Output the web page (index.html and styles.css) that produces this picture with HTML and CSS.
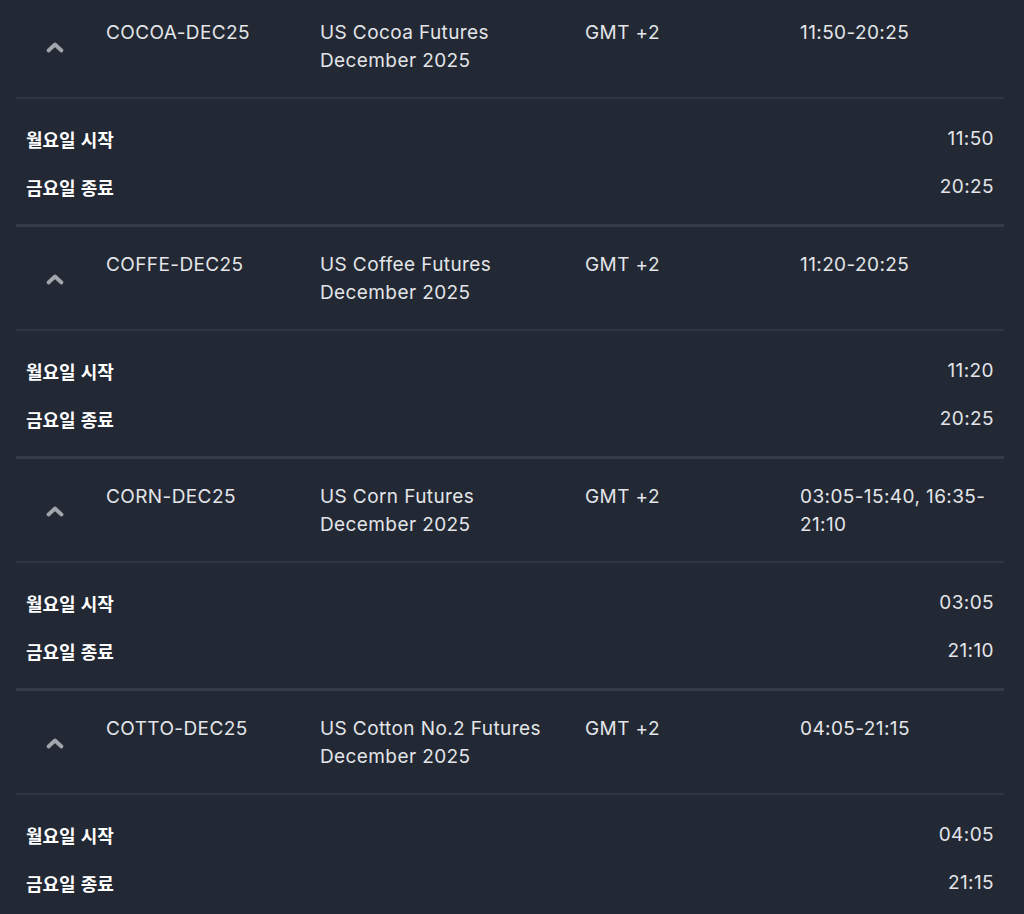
FILE: index.html
```html
<!DOCTYPE html>
<html lang="ko">
<head>
<meta charset="utf-8">
<link rel="stylesheet" href="styles.css">
</head>
<body>
<div class="list">
  <section class="group">
    <div class="head">
      <div class="chev"><svg width="20" height="14" viewBox="0 0 20 14"><path d="M3.5 10.5 L10 4.5 L16.5 10.5" fill="none" stroke="currentColor" stroke-width="3.8" stroke-linecap="round" stroke-linejoin="round"/></svg></div>
      <div class="cell">COCOA-DEC25</div>
      <div class="cell">US Cocoa Futures December 2025</div>
      <div class="cell">GMT +2</div>
      <div class="time">11:50-20:25</div>
    </div>
    <div class="details">
      <div class="drow"><span class="lbl">월요일 시작</span><span class="val">11:50</span></div>
      <div class="drow"><span class="lbl">금요일 종료</span><span class="val">20:25</span></div>
    </div>
  </section>
  <section class="group">
    <div class="head">
      <div class="chev"><svg width="20" height="14" viewBox="0 0 20 14"><path d="M3.5 10.5 L10 4.5 L16.5 10.5" fill="none" stroke="currentColor" stroke-width="3.8" stroke-linecap="round" stroke-linejoin="round"/></svg></div>
      <div class="cell">COFFE-DEC25</div>
      <div class="cell">US Coffee Futures December 2025</div>
      <div class="cell">GMT +2</div>
      <div class="time">11:20-20:25</div>
    </div>
    <div class="details">
      <div class="drow"><span class="lbl">월요일 시작</span><span class="val">11:20</span></div>
      <div class="drow"><span class="lbl">금요일 종료</span><span class="val">20:25</span></div>
    </div>
  </section>
  <section class="group">
    <div class="head">
      <div class="chev"><svg width="20" height="14" viewBox="0 0 20 14"><path d="M3.5 10.5 L10 4.5 L16.5 10.5" fill="none" stroke="currentColor" stroke-width="3.8" stroke-linecap="round" stroke-linejoin="round"/></svg></div>
      <div class="cell">CORN-DEC25</div>
      <div class="cell">US Corn Futures December 2025</div>
      <div class="cell">GMT +2</div>
      <div class="time">03:05-15:40, 16:35-<wbr>21:10</div>
    </div>
    <div class="details">
      <div class="drow"><span class="lbl">월요일 시작</span><span class="val">03:05</span></div>
      <div class="drow"><span class="lbl">금요일 종료</span><span class="val">21:10</span></div>
    </div>
  </section>
  <section class="group">
    <div class="head">
      <div class="chev"><svg width="20" height="14" viewBox="0 0 20 14"><path d="M3.5 10.5 L10 4.5 L16.5 10.5" fill="none" stroke="currentColor" stroke-width="3.8" stroke-linecap="round" stroke-linejoin="round"/></svg></div>
      <div class="cell">COTTO-DEC25</div>
      <div class="cell">US Cotton No.2 Futures December 2025</div>
      <div class="cell">GMT +2</div>
      <div class="time">04:05-21:15</div>
    </div>
    <div class="details">
      <div class="drow"><span class="lbl">월요일 시작</span><span class="val">04:05</span></div>
      <div class="drow"><span class="lbl">금요일 종료</span><span class="val">21:15</span></div>
    </div>
  </section>
</div>
</body>
</html>
```

FILE: styles.css
```css
html, body {
  margin: 0;
  padding: 0;
  background: #222834;
  overflow: hidden;
}
body {
  font-family: Inter, "Noto Sans CJK KR", sans-serif;
  font-size: 19px;
  letter-spacing: 0.4px;
  line-height: 28px;
  color: #e3e5e8;
}
.list {
  margin: -8px 20px 0 16px;
}
.group {
  border-top: 3px solid #343a46;
}
.head {
  display: grid;
  grid-template-columns: 90px 214px 265px 215px 1fr;
  padding: 24px 10px 22px 0;
  border-bottom: 2px solid #303643;
}
.cell {
  padding-right: 14px;
}
.time {
  padding-right: 0;
}
.chev {
  align-self: center;
  padding-left: 29px;
  color: #a2a5ab;
  height: 14px;
  display: flex;
}
.details {
  padding: 16px 0 13px;
}
.drow {
  display: flex;
  justify-content: space-between;
  padding: 10px 10px;
}
.lbl {
  font-family: "Noto Sans CJK KR", Inter, sans-serif;
  font-size: 18px;
  letter-spacing: 0;
  font-weight: 700;
  color: #ffffff;
}
.val {
  color: #e3e5e8;
}
```
